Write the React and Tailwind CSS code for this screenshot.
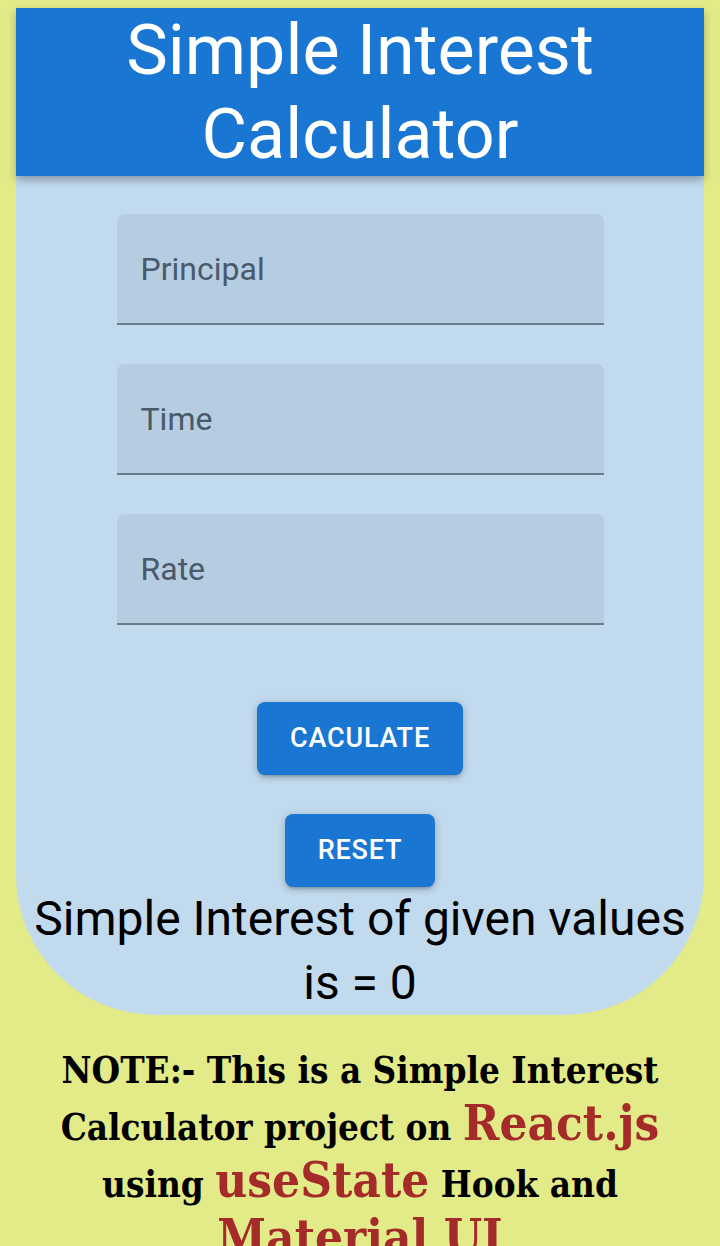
import { useState } from "react";

const FIELDS = ["Principal", "Time", "Rate"];

function FilledField({ label, value, onChange }) {
    return (
        <div className="relative w-[487px] h-[111px] bg-[#b6cde1] rounded-t-[8px] border-b-2 border-[#6a7d8d]">
            <input
                className="absolute inset-0 w-full h-full bg-transparent outline-none px-[24px] pt-[30px] text-[32px] text-black"
                value={ value }
                onChange={ (e) => onChange(e.target.value) }
            />
            { value === "" ? (
                <span className="pointer-events-none absolute left-[24px] top-[36px] text-[32px] leading-[38px] text-[#48596a]">
                    { label }
                </span>
            ) : null }
        </div>
    );
}

function BlueButton({ text, onClick }) {
    return (
        <button
            onClick={ onClick }
            className="h-[73px] px-[33px] rounded-[8px] bg-[#1976d2] text-white text-[27px] font-medium tracking-[0.03em] uppercase shadow-[0_3px_3px_-2px_rgba(0,0,0,0.2),0_3px_6px_0_rgba(0,0,0,0.14),0_1px_10px_0_rgba(0,0,0,0.12)]"
        >
            { text }
        </button>
    );
}

export default function App() {
    const [values, setValues] = useState({ Principal: "", Time: "", Rate: "" });
    const [interest, setInterest] = useState(0);

    const calculate = () => {
        const p = Number(values.Principal) || 0;
        const t = Number(values.Time) || 0;
        const r = Number(values.Rate) || 0;
        setInterest((p * t * r) / 100);
    }

    const reset = () => {
        setValues({ Principal: "", Time: "", Rate: "" });
        setInterest(0);
    }

    return (
        <div className="min-h-screen bg-[#e2eb88] pt-[8px] px-[16px] font-['Roboto',sans-serif] overflow-hidden">
            <div className="bg-[#c2daee] rounded-b-[140px]">
                <h1 className="bg-[#1976d2] text-white text-center text-[70px] leading-[84px] font-normal shadow-[0_4px_8px_rgba(0,0,0,0.3)]">
                    Simple Interest
                    <br />
                    Calculator
                </h1>

                <div className="flex flex-col items-center pt-[38px] gap-[39px]">
                    { FIELDS.map((name) => (
                        <FilledField
                            key={ name }
                            label={ name }
                            value={ values[name] }
                            onChange={ (v) => setValues({ ...values, [name]: v }) }
                        />
                    )) }
                </div>

                <div className="flex flex-col items-center mt-[77px] gap-[39px]">
                    <BlueButton text="Caculate" onClick={ calculate } />
                    <BlueButton text="Reset" onClick={ reset } />
                </div>

                <p className="text-center text-black text-[48px] leading-[64px]">
                    Simple Interest of given values is = { interest }
                </p>
            </div>

            <p className="mx-auto mt-[28px] w-[660px] text-center font-['DejaVu_Serif_Condensed','DejaVu_Serif',serif] font-bold text-[36.5px] leading-[56px] text-black">
                NOTE:- This is a Simple Interest Calculator project on{ " " }
                <span className="text-[49px] leading-none text-[#a52a2a]">React.js</span>{ " " }
                using{ " " }
                <span className="text-[49px] leading-none text-[#a52a2a]">useState</span>{ " " }
                Hook and{ " " }
                <span className="text-[49px] leading-none text-[#a52a2a]">Material UI</span>
            </p>
        </div>
    );
}
